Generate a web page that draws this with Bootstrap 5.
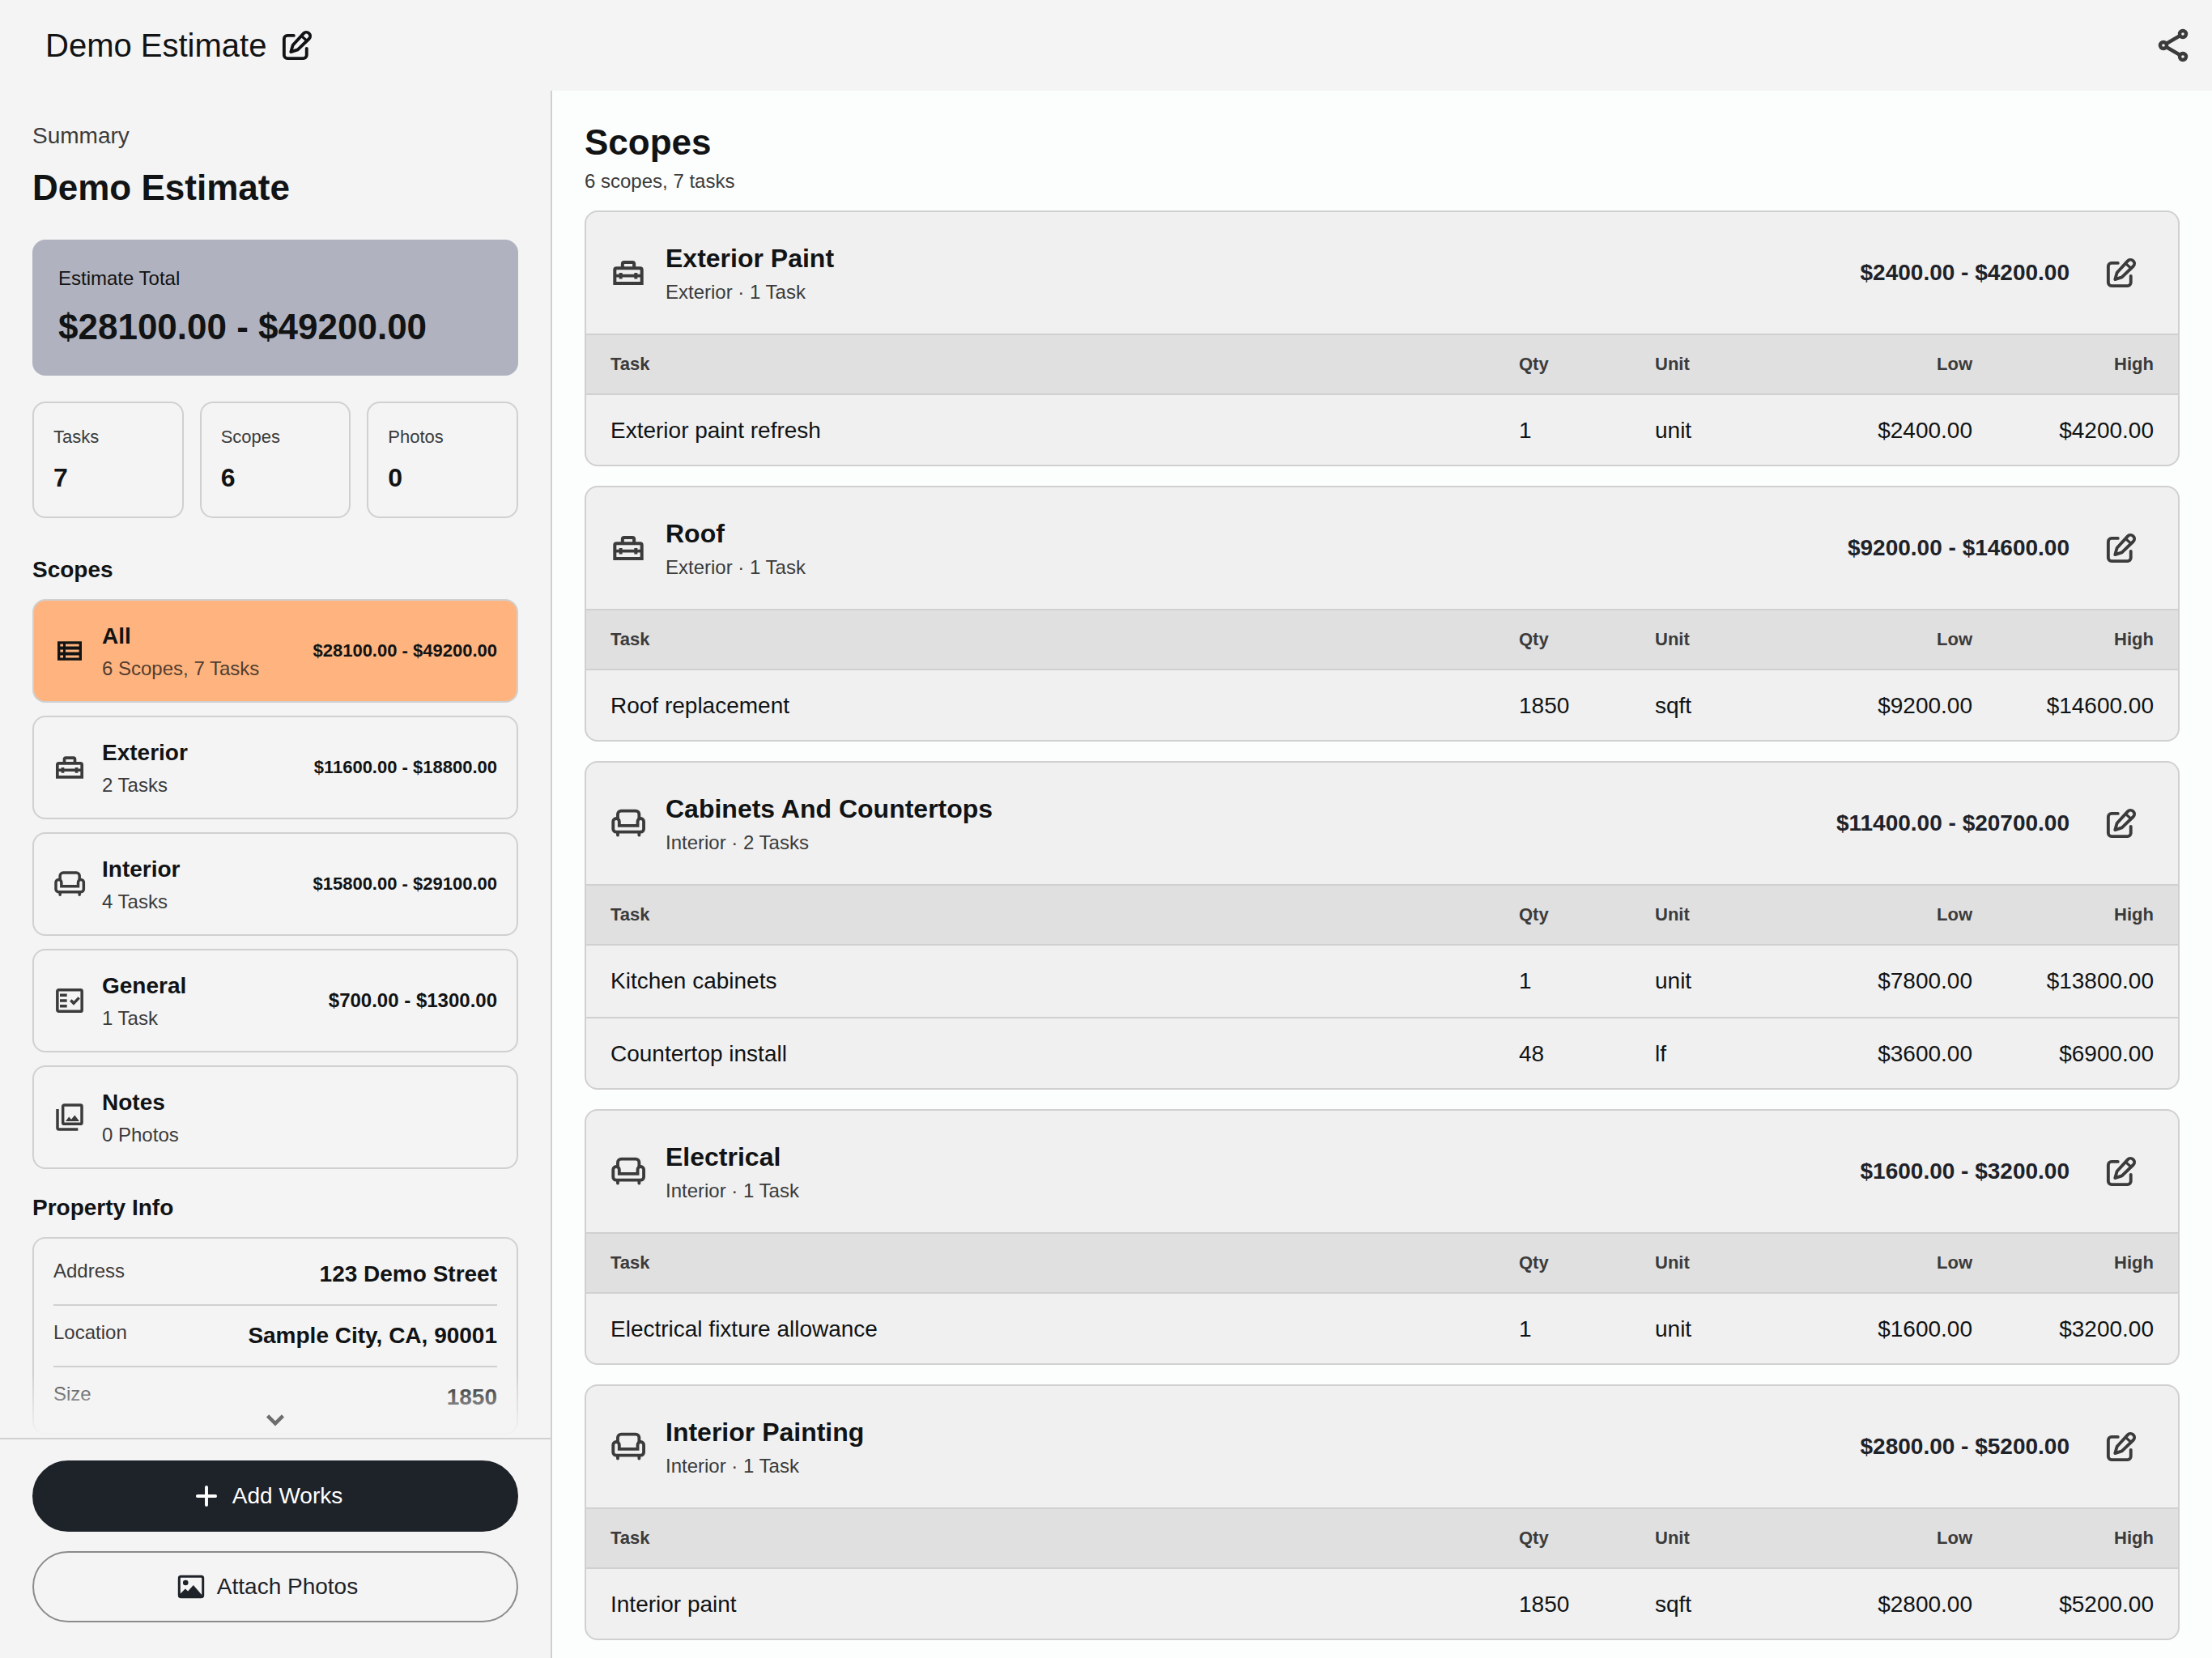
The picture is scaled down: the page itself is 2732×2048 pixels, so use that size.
<!DOCTYPE html>
<html lang="en">
<head>
<meta charset="utf-8">
<meta name="viewport" content="width=device-width, initial-scale=1">
<title>Demo Estimate</title>
<link href="https://cdn.jsdelivr.net/npm/bootstrap@5.3.0/dist/css/bootstrap.min.css" rel="stylesheet">
<style>
  :root { --line: #d0d0d0; --ink: #111314; --muted-ink: #3b3b3b; --panel: #f4f4f4; --navy: #1e2229; }
  body { font-family: "Liberation Sans", Arial, sans-serif; font-size: 28px; line-height: 40px; color: var(--ink); background: var(--panel); }
  h1, h2, h3, p, dl, dd, dt { margin: 0; font-weight: 400; }
  svg { display: block; flex: none; }
  .ic-sm { width: 36px; height: 36px; }
  .ic-md { width: 40px; height: 40px; }
  .ic-lg { width: 44px; height: 44px; }
  .ic-xl { width: 48px; height: 48px; }
  .top-bar { height: 112px; padding: 0 24px 0 56px; }
  .top-title { font-size: 40px; line-height: 48px; }
  .body-row { min-height: 0; }
  .plain-btn { border: 0; background: none; padding: 0; color: inherit; display: flex; align-items: center; justify-content: center; }
  .side { width: 682px; flex: none; border-right: 2px solid var(--line); }
  .side-scroll { padding: 36px 40px 0; position: relative; overflow: hidden; min-height: 0; }
  .big-text { font-size: 44px; line-height: 56px; font-weight: 700; }
  .mid-text { font-size: 32px; line-height: 44px; font-weight: 700; }
  .caption-text { font-size: 24px; line-height: 32px; }
  .tiny-text { font-size: 22px; line-height: 32px; }
  .dim { color: var(--muted-ink); }
  .sect { font-size: 28px; line-height: 40px; font-weight: 700; }
  .total-box { background: #b0b2bf; border-radius: 16px; padding: 32px; margin-top: 36px; height: 168px; }
  .outlined { border: 2px solid var(--line); border-radius: 16px; }
  .stats { gap: 20px; margin-top: 32px; margin-bottom: 44px; }
  .stat { flex: 1 1 0; height: 144px; padding: 26px 24px; }
  .stat .mid-text { margin-top: 12px; }
  .scope-item { display: flex; align-items: center; gap: 20px; padding: 24px; color: var(--ink); text-decoration: none; }
  .scope-item svg { color: var(--muted-ink); }
  .scope-item.current { background: #ffb47f; }
  .scope-item.current svg { color: var(--ink); }
  .scope-item.current .dim { color: #513d2f; }
  .info-title { margin-top: 28px; }
  .info-box { padding: 24px 24px 0; height: 244px; }
  .info-row + .info-row { border-top: 2px solid var(--line); padding-top: 17px; margin-top: 17px; }
  .fade-out { position: absolute; left: 0; right: 0; bottom: 0; height: 80px; background: linear-gradient(rgba(244,244,244,0), #f4f4f4); padding-top: 40px; color: #6d6d6d; }
  .side-foot { border-top: 2px solid var(--line); padding: 26px 40px 44px; gap: 24px; }
  .pill { height: 88px; border-radius: 44px; font-size: 28px; line-height: 40px; display: flex; align-items: center; justify-content: center; gap: 14px; padding: 0 48px 0 28px; color: var(--navy); border: 2px solid #8b8b8b; }
  .pill.solid, .pill.solid:hover { background: var(--navy); border-color: var(--navy); color: #fff; }
  .main-area { background: #fcfdfd; padding: 36px 40px 22px; min-width: 0; overflow: hidden; }
  .card-list { margin-top: 20px; }
  .scope-card { background: #f0f0f0; overflow: hidden; }
  .scope-head { padding: 35px 30px; }
  .scope-head > svg { color: var(--muted-ink); }
  .amount { font-weight: 700; color: var(--navy); }
  .edit-btn { width: 80px; height: 80px; color: var(--muted-ink); }
  .tasks { width: 100%; table-layout: fixed; border-collapse: separate; border-spacing: 0; }
  .tasks th { background: #e0e0e0; color: var(--muted-ink); font-size: 22px; line-height: 32px; padding: 20px 0; border-top: 2px solid var(--line); border-bottom: 2px solid var(--line); }
  .tasks td { padding: 24px 0; border-bottom: 2px solid var(--line); }
  .tasks tr:last-child td { border-bottom: 0; padding-bottom: 22px; }
  .tasks th:first-child, .tasks td:first-child { padding-left: 30px; }
  .tasks th:last-child, .tasks td:last-child { padding-right: 30px; }
  .c-short { width: 168px; } .c-low { width: 224px; } .c-high { width: 254px; }
</style>
</head>
<body>
<svg class="d-none" aria-hidden="true">
  <symbol id="i-edit" viewBox="0 0 24 24"><g fill="none" stroke="currentColor" stroke-width="2.1" stroke-linecap="round" stroke-linejoin="round"><path d="M9.700 5.400H5.400a2.200 2.200 0 0 0-2.200 2.200v11a2.200 2.200 0 0 0 2.200 2.200h10.800a2.200 2.200 0 0 0 2.200-2.200v-4.500"/><path d="M7.800 16.400l1.300-4.500 7.200-7.900a2.550 2.550 0 0 1 3.800 3.500l-7.700 7.400z"/><path stroke-width="1.800" d="M15.500 6.200l2.800 2.500"/></g></symbol>
  <symbol id="i-share" viewBox="0 0 24 24"><g fill="none" stroke="currentColor" stroke-width="2.200"><circle cx="18" cy="5" r="2"/><circle cx="6" cy="12" r="2"/><circle cx="18" cy="19" r="2"/><path d="M7.700 11L16.300 6M7.700 13l8.600 5"/></g></symbol>
  <symbol id="i-list" viewBox="0 0 24 24"><path fill="currentColor" fill-rule="evenodd" d="M3 5h18v14H3zM5 6.900v1.800h2.200V6.900zM9 6.900v1.800h10V6.900zM5 11.100v1.800h2.200v-1.800zM9 11.100v1.800h10v-1.800zM5 15.300v1.800h2.200v-1.800zM9 15.300v1.800h10v-1.800z"/></symbol>
  <symbol id="i-tools" viewBox="0 0 24 24"><path fill="currentColor" fill-rule="evenodd" d="M4 7.800h3V6a2.200 2.200 0 0 1 2.200-2.200h5.600A2.200 2.200 0 0 1 17 6v1.800h3a2.200 2.200 0 0 1 2.200 2.200v10.200H1.800V10A2.200 2.200 0 0 1 4 7.800zM9.200 6v1.800h5.600V6zM4 10v2.900h1.800V12H8v.9h8V12h2.200v.9H20V10zM4 15v3h16v-3h-1.800v1.100H16V15H8v1.100H5.800V15z"/></symbol>
  <symbol id="i-chair" viewBox="0 0 24 24"><g fill="none" stroke="currentColor" stroke-width="2.100"><path d="M4.900 9V5.900a2.300 2.300 0 0 1 2.300-2.300H17a2.300 2.300 0 0 1 2.300 2.300V9"/><path d="M5.900 13.600v-2.800a2.050 2.050 0 0 0-4.100 0v5a2 2 0 0 0 2 2h16.600a2 2 0 0 0 2-2v-5a2.050 2.050 0 0 0-4.100 0v2.800z"/><path stroke-linecap="round" d="M4.900 18.500v1.400M19.300 18.500v1.400"/></g></symbol>
  <symbol id="i-check" viewBox="0 0 24 24"><rect x="2.900" y="4" width="18.200" height="16" rx="1" fill="none" stroke="currentColor" stroke-width="2.100"/><path fill="none" stroke="currentColor" stroke-width="2.100" d="M4.800 7.900H10M4.800 12H10M4.800 16.100H10M12.800 11.700l2.200 2.300 4-4.200"/></symbol>
  <symbol id="i-photos" viewBox="0 0 24 24"><rect x="7" y="3" width="14" height="14" rx="1" fill="none" stroke="currentColor" stroke-width="2.100"/><path fill="none" stroke="currentColor" stroke-width="2.100" d="M3 6v14a1 1 0 0 0 1 1h14.200"/><path fill="currentColor" d="M9 15l2.500-3.300 1.700 2 2.600-3.200L19.200 15z"/></symbol>
  <symbol id="i-image" viewBox="0 0 24 24"><rect x="2.200" y="3.500" width="19.600" height="17" rx="1.500" fill="none" stroke="currentColor" stroke-width="2"/><circle cx="7.500" cy="8.700" r="2.200" fill="currentColor"/><path fill="currentColor" d="M2.200 18.600L7.200 13.600 9.400 15.700 13.900 10.600 20.800 18.600 21.500 20.500H2.500z"/></symbol>
  <symbol id="i-plus" viewBox="0 0 24 24"><path fill="none" stroke="currentColor" stroke-width="2.600" stroke-linecap="round" d="M12 4.600v14.800M4.600 12h14.800"/></symbol>
  <symbol id="i-down" viewBox="0 0 24 24"><path fill="none" stroke="currentColor" stroke-width="3" d="M5.700 8.600l6.300 6.300 6.300-6.300"/></symbol>
</svg>

<div class="d-flex flex-column vh-100">
  <header class="top-bar d-flex align-items-center justify-content-between flex-shrink-0">
    <div class="d-flex align-items-center gap-3">
      <span class="top-title">Demo Estimate</span>
      <button class="plain-btn" type="button" aria-label="Rename estimate"><svg class="ic-lg"><use href="#i-edit"/></svg></button>
    </div>
    <button class="plain-btn dim" type="button" aria-label="Share"><svg class="ic-xl"><use href="#i-share"/></svg></button>
  </header>

  <div class="body-row d-flex flex-grow-1">
    <aside class="side d-flex flex-column">
      <div class="side-scroll flex-grow-1">
        <p class="dim">Summary</p>
        <h1 class="big-text mt-3">Demo Estimate</h1>
        <div class="total-box">
          <p class="caption-text">Estimate Total</p>
          <p class="big-text mt-3">$28100.00 - $49200.00</p>
        </div>
        <div class="stats d-flex">
          <div class="stat outlined"><p class="tiny-text dim">Tasks</p><p class="mid-text">7</p></div>
          <div class="stat outlined"><p class="tiny-text dim">Scopes</p><p class="mid-text">6</p></div>
          <div class="stat outlined"><p class="tiny-text dim">Photos</p><p class="mid-text">0</p></div>
        </div>
        <h2 class="sect mb-3">Scopes</h2>
        <nav class="d-flex flex-column gap-3" aria-label="Scopes">
          <a class="scope-item outlined current" href="#all"><svg class="ic-md"><use href="#i-list"/></svg><span class="flex-grow-1"><span class="sect d-block">All</span><span class="caption-text dim d-block mt-1">6 Scopes, 7 Tasks</span></span><b class="tiny-text">$28100.00 - $49200.00</b></a>
          <a class="scope-item outlined" href="#exterior"><svg class="ic-md"><use href="#i-tools"/></svg><span class="flex-grow-1"><span class="sect d-block">Exterior</span><span class="caption-text dim d-block mt-1">2 Tasks</span></span><b class="tiny-text">$11600.00 - $18800.00</b></a>
          <a class="scope-item outlined" href="#interior"><svg class="ic-md"><use href="#i-chair"/></svg><span class="flex-grow-1"><span class="sect d-block">Interior</span><span class="caption-text dim d-block mt-1">4 Tasks</span></span><b class="tiny-text">$15800.00 - $29100.00</b></a>
          <a class="scope-item outlined" href="#general"><svg class="ic-md"><use href="#i-check"/></svg><span class="flex-grow-1"><span class="sect d-block">General</span><span class="caption-text dim d-block mt-1">1 Task</span></span><b class="caption-text">$700.00 - $1300.00</b></a>
          <a class="scope-item outlined" href="#notes"><svg class="ic-md"><use href="#i-photos"/></svg><span class="flex-grow-1"><span class="sect d-block">Notes</span><span class="caption-text dim d-block mt-1">0 Photos</span></span></a>
        </nav>
        <h2 class="sect info-title mb-3">Property Info</h2>
        <dl class="info-box outlined">
          <div class="info-row d-flex justify-content-between"><dt class="caption-text dim">Address</dt><dd class="sect">123 Demo Street</dd></div>
          <div class="info-row d-flex justify-content-between"><dt class="caption-text dim">Location</dt><dd class="sect">Sample City, CA, 90001</dd></div>
          <div class="info-row d-flex justify-content-between"><dt class="caption-text dim">Size</dt><dd class="sect">1850</dd></div>
        </dl>
        <div class="fade-out d-flex justify-content-center"><svg class="ic-sm"><use href="#i-down"/></svg></div>
      </div>
      <div class="side-foot d-flex flex-column flex-shrink-0">
        <button class="btn pill solid" type="button"><svg class="ic-sm"><use href="#i-plus"/></svg>Add Works</button>
        <button class="btn pill" type="button"><svg class="ic-sm"><use href="#i-image"/></svg>Attach Photos</button>
      </div>
    </aside>

    <main class="main-area flex-grow-1">
      <h2 class="big-text">Scopes</h2>
      <p class="caption-text dim mt-1">6 scopes, 7 tasks</p>
      <div id="cards" class="card-list d-flex flex-column gap-4"></div>
    </main>
  </div>
</div>

<script src="https://cdn.jsdelivr.net/npm/bootstrap@5.3.0/dist/js/bootstrap.bundle.min.js"></script>
<script>
  const scopes = [
    ["tools", "Exterior Paint", "Exterior · 1 Task", "$2400.00 - $4200.00", [["Exterior paint refresh", "1", "unit", "$2400.00", "$4200.00"]]],
    ["tools", "Roof", "Exterior · 1 Task", "$9200.00 - $14600.00", [["Roof replacement", "1850", "sqft", "$9200.00", "$14600.00"]]],
    ["chair", "Cabinets And Countertops", "Interior · 2 Tasks", "$11400.00 - $20700.00", [["Kitchen cabinets", "1", "unit", "$7800.00", "$13800.00"], ["Countertop install", "48", "lf", "$3600.00", "$6900.00"]]],
    ["chair", "Electrical", "Interior · 1 Task", "$1600.00 - $3200.00", [["Electrical fixture allowance", "1", "unit", "$1600.00", "$3200.00"]]],
    ["chair", "Interior Painting", "Interior · 1 Task", "$2800.00 - $5200.00", [["Interior paint", "1850", "sqft", "$2800.00", "$5200.00"]]]
  ];
  document.getElementById("cards").innerHTML = scopes.map(([icon, name, sub, amount, rows]) => `
    <section class="scope-card outlined">
      <div class="scope-head d-flex align-items-center">
        <svg class="ic-lg me-4"><use href="#i-${icon}"/></svg>
        <div class="flex-grow-1"><h3 class="mid-text">${name}</h3><p class="caption-text dim mt-1">${sub}</p></div>
        <span class="amount me-4">${amount}</span>
        <button class="plain-btn edit-btn my-n3" type="button" aria-label="Edit ${name}"><svg class="ic-lg"><use href="#i-edit"/></svg></button>
      </div>
      <table class="tasks">
        <thead><tr><th>Task</th><th class="c-short">Qty</th><th class="c-short">Unit</th><th class="c-low text-end">Low</th><th class="c-high text-end">High</th></tr></thead>
        <tbody>${rows.map(r => `<tr><td>${r[0]}</td><td>${r[1]}</td><td>${r[2]}</td><td class="text-end">${r[3]}</td><td class="text-end">${r[4]}</td></tr>`).join("")}</tbody>
      </table>
    </section>`).join("");
</script>
</body>
</html>
